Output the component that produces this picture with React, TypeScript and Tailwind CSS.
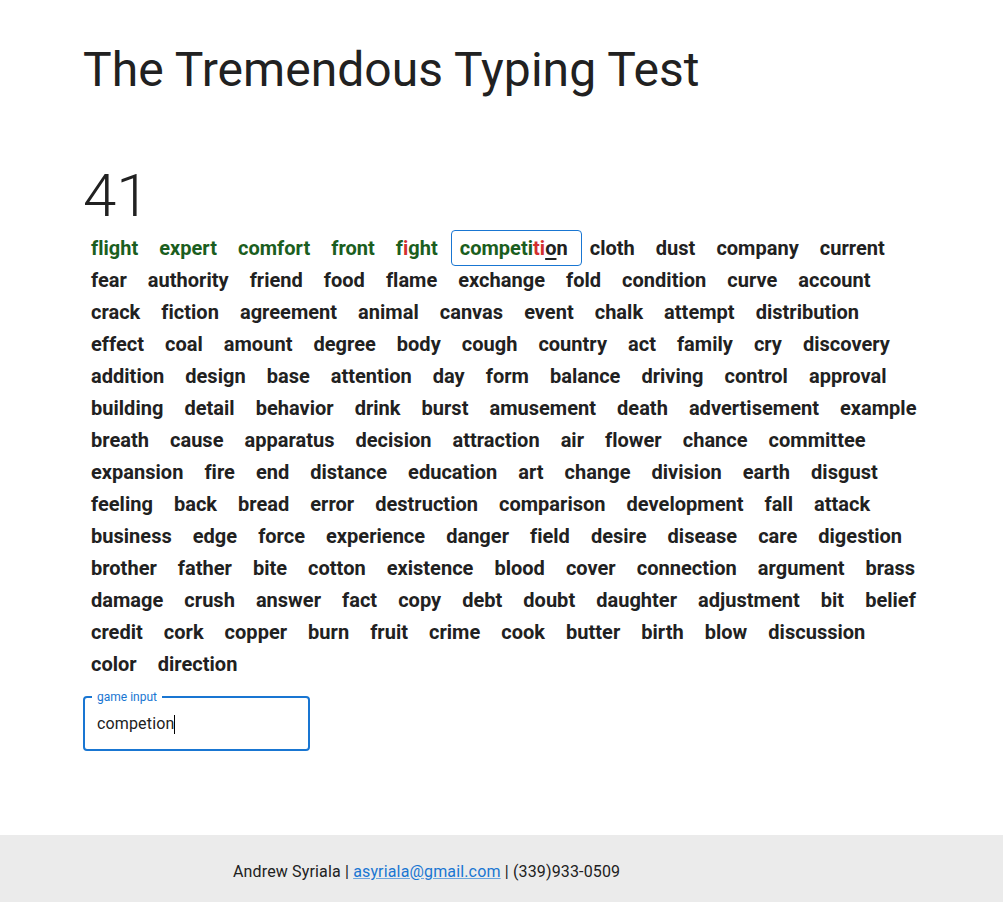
import React from "react";

const rows: string[][] = [
  ["flight", "expert", "comfort", "front", "fight", "competition", "cloth", "dust", "company", "current"],
  ["fear", "authority", "friend", "food", "flame", "exchange", "fold", "condition", "curve", "account"],
  ["crack", "fiction", "agreement", "animal", "canvas", "event", "chalk", "attempt", "distribution"],
  ["effect", "coal", "amount", "degree", "body", "cough", "country", "act", "family", "cry", "discovery"],
  ["addition", "design", "base", "attention", "day", "form", "balance", "driving", "control", "approval"],
  ["building", "detail", "behavior", "drink", "burst", "amusement", "death", "advertisement", "example"],
  ["breath", "cause", "apparatus", "decision", "attraction", "air", "flower", "chance", "committee"],
  ["expansion", "fire", "end", "distance", "education", "art", "change", "division", "earth", "disgust"],
  ["feeling", "back", "bread", "error", "destruction", "comparison", "development", "fall", "attack"],
  ["business", "edge", "force", "experience", "danger", "field", "desire", "disease", "care", "digestion"],
  ["brother", "father", "bite", "cotton", "existence", "blood", "cover", "connection", "argument", "brass"],
  ["damage", "crush", "answer", "fact", "copy", "debt", "doubt", "daughter", "adjustment", "bit", "belief"],
  ["credit", "cork", "copper", "burn", "fruit", "crime", "cook", "butter", "birth", "blow", "discussion"],
  ["color", "direction"],
];

const green = "text-[#1b5e20]";
const red = "text-[#d32f2f]";

function Word({ word, rowIdx, idx }: { word: string; rowIdx: number; idx: number }) {
  if (rowIdx === 0 && idx < 4) {
    return <span className={`px-2 ${green}`}>{word} </span>;
  }
  if (rowIdx === 0 && idx === 4) {
    return (
      <span className="px-2">
        <span className={green}>f</span>
        <span className={red}>i</span>
        <span className={green}>ght</span>{" "}
      </span>
    );
  }
  if (rowIdx === 0 && idx === 5) {
    return (
      <span className="px-2 py-[5px] border border-[#1976d2] rounded-[4px]">
        <span className={green}>competi</span>
        <span className={red}>ti</span>
        <span className="underline underline-offset-[3px]">o</span>
        <span>n</span>{" "}
      </span>
    );
  }
  return <span className="px-2">{word} </span>;
}

export default function App() {
  return (
    <div
      className="min-h-screen flex flex-col bg-white text-[#212121]"
      style={{ fontFamily: "Roboto, 'Noto Sans', Arial, sans-serif" }}
    >
      <main className="flex-1 pl-[83px]">
        <h1 className="mt-[42px] text-[48px] leading-[56px] font-normal tracking-[0.05px]">The Tremendous Typing Test</h1>
        <div className="mt-[62px] text-[60px] leading-[72px] font-light">41</div>
        <div className="text-[20px] leading-[32px] font-bold tracking-[0.02px]">
          {rows.map((row, r) => (
            <div key={r} className="whitespace-nowrap">
              {row.map((w, i) => (
                <Word key={i} word={w} rowIdx={r} idx={i} />
              ))}
            </div>
          ))}
        </div>
        <div className="relative mt-4 w-[227px] h-[55px] border-2 border-[#1976d2] rounded-[4px] flex items-center pl-3 pt-px">
          <span className="absolute -top-[7px] left-[7px] px-[5px] bg-white text-[12px] leading-[12px] text-[#1976d2]">
            game input
          </span>
          <span className="text-[16px] leading-[24px] text-[#212121] tracking-[0.15px]">competion</span>
          <span className="inline-block w-px h-[19px] bg-black" />
        </div>
      </main>
      <footer className="h-[67px] bg-[#ebebeb] pl-[233px] pt-[25px] text-[16px] leading-[24px] tracking-[0.15px] text-[#212121]">
        Andrew Syriala |{" "}
        <a href="#" className="text-[#1976d2] underline decoration-[#1976d2]/60">
          asyriala@gmail.com
        </a>{" "}
        | (339)933-0509
      </footer>
    </div>
  );
}
